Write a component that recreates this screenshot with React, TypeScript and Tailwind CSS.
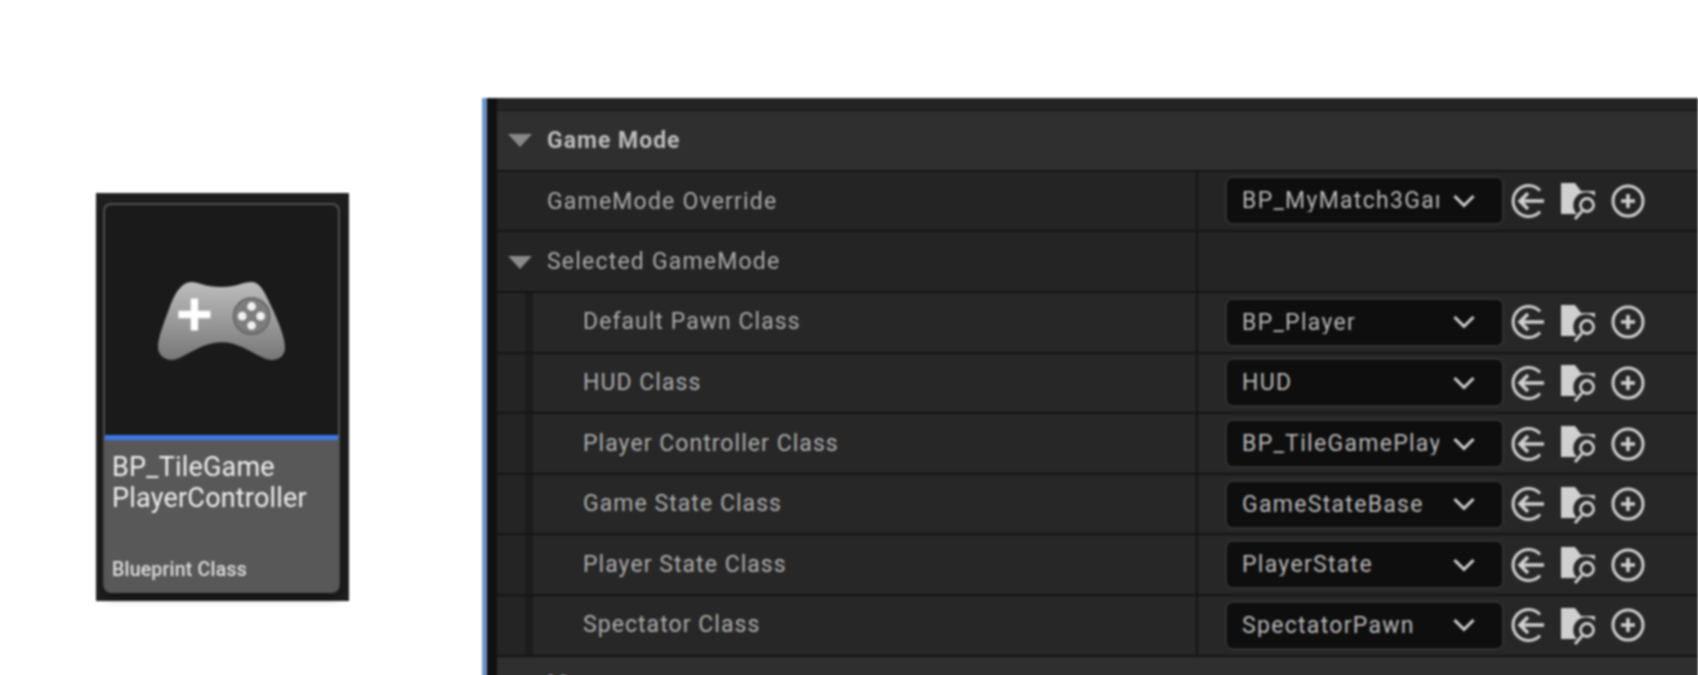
import React from "react";

const rows = [
  ["Default Pawn Class", "BP_Player"],
  ["HUD Class", "HUD"],
  ["Player Controller Class", "BP_TileGamePlayerController"],
  ["Game State Class", "GameStateBase"],
  ["Player State Class", "PlayerState"],
  ["Spectator Class", "SpectatorPawn"],
];

function Triangle() {
  return (
    <svg width="24" height="14" viewBox="0 0 24 14" className="shrink-0">
      <path d="M0 1 H24 L12 14 Z" fill="#8a8a8a" />
    </svg>
  );
}

function ResetIcon() {
  return (
    <svg width="34" height="36" viewBox="0 0 34 36" fill="none" stroke="#d0d0d0" strokeWidth="3" className="shrink-0">
      <path d="M29 7.5 A15.5 15.5 0 1 0 29 28.5" />
      <path d="M33 18 H9 M17 10 L9 18 L17 26" strokeWidth="3.6" />
    </svg>
  );
}

function FolderIcon() {
  return (
    <svg width="37" height="37" viewBox="0 0 37 37" className="mt-[2px] shrink-0">
      <path d="M1 0 H15 L21 8 H35 V13 A11 11 0 0 0 17 31 H1 Z" fill="#d0d0d0" />
      <circle cx="27" cy="22" r="6.5" fill="none" stroke="#d0d0d0" strokeWidth="2.8" />
      <path d="M22 28 L15 36" stroke="#d0d0d0" strokeWidth="3" />
    </svg>
  );
}

function PlusIcon() {
  return (
    <svg width="34" height="34" viewBox="0 0 34 34" fill="none" stroke="#d0d0d0" className="shrink-0">
      <circle cx="17" cy="17" r="15" strokeWidth="3" />
      <path d="M17 10 V24 M10 17 H24" strokeWidth="3.6" />
    </svg>
  );
}

function Combo({ text }: { text: string }) {
  return (
    <div className="flex items-center gap-[13px]">
      <div className="flex h-[47px] w-[277px] shrink-0 items-center rounded-[7px] border border-[#2a2a2a] bg-[#0e0e0e] pl-[15px] outline outline-1 outline-[#383838]">
        <span className="w-[197px] overflow-hidden whitespace-nowrap text-[23px] leading-none tracking-[1.3px] text-[#b8b8b8]">
          {text}
        </span>
        <svg width="22" height="14" viewBox="0 0 22 14" fill="none" stroke="#d0d0d0" strokeWidth="3" className="ml-[14px] shrink-0">
          <path d="M1.5 2 L11 11.5 L20.5 2" />
        </svg>
      </div>
      <div className="ml-[-5px] flex items-center">
        <ResetIcon />
        <div className="ml-[15px]">
          <FolderIcon />
        </div>
        <div className="ml-[14px]">
          <PlusIcon />
        </div>
      </div>
    </div>
  );
}

function ValueCell({ text }: { text?: string }) {
  return (
    <div className="flex h-full flex-1 items-center border-l-2 border-[#141414] pl-[28px]">
      {text ? <Combo text={text} /> : null}
    </div>
  );
}

function Gamepad() {
  return (
    <svg width="127" height="78" viewBox="55 65 380 233">
      <defs>
        <linearGradient id="padFill" x1="0" y1="0" x2="0" y2="1">
          <stop offset="0" stopColor="#bdbdbd" />
          <stop offset="1" stopColor="#777777" />
        </linearGradient>
      </defs>
      <path
        d="M155 65 C175 65 195 80 245 80 C290 80 310 65 335 65 C365 65 380 110 400 150 C420 195 435 235 435 262 C435 285 415 298 395 298 C360 298 310 245 245 245 C180 245 130 298 95 298 C70 298 55 280 55 258 C55 230 75 180 90 140 C105 100 125 65 155 65 Z"
        fill="url(#padFill)"
      />
      <path d="M164 114 V210 M116 162 H212" stroke="#ffffff" strokeWidth="22" fill="none" />
      <circle cx="335" cy="167" r="54" fill="#7d7d7d" stroke="#636363" strokeWidth="5" />
      <circle cx="335" cy="138" r="13" fill="#f2f2f2" />
      <circle cx="307" cy="167" r="13" fill="#f2f2f2" />
      <circle cx="362" cy="167" r="13" fill="#f2f2f2" />
      <circle cx="335" cy="195" r="13" fill="#f2f2f2" />
    </svg>
  );
}

function AssetCard() {
  return (
    <div className="flex h-[408px] w-[253px] flex-col bg-[#1f1f1f] pb-[8px] pl-[7px] pr-[9px] pt-[10px] blur-[0.8px]">
      <div className="flex h-full flex-col overflow-hidden rounded-[8px] border-2 border-b-0 border-[#505050] bg-[#585858] shadow-[0_4px_10px_rgba(0,0,0,0.5)]">
        <div className="flex h-[230px] shrink-0 items-center justify-center bg-[#1a1a1a] pr-[1px] pt-[2px]">
          <Gamepad />
        </div>
        <div className="h-[5px] shrink-0 bg-[#3b78e7]" />
        <div className="flex flex-1 flex-col px-[7px] pt-[12px]">
          <div className="text-[27px] leading-[31px] tracking-[0.2px] text-[#efefef]">
            BP_TileGame
            <br />
            PlayerController
          </div>
          <div className="mt-auto pb-[12px] text-[19.5px] font-medium leading-[22px] tracking-[0.2px] text-[#dedede]">Blueprint Class</div>
        </div>
      </div>
    </div>
  );
}

function DetailsPanel() {
  return (
    <div className="flex flex-1 items-stretch blur-[0.8px]">
      <div className="w-[5px] shrink-0 bg-[#6b93c4]" />
      <div className="w-[10px] shrink-0 bg-[#111111]" />
      <div className="flex flex-1 flex-col">
        <div className="h-[13px] shrink-0 border-b border-[#141414] bg-[#242424]" />
        <div className="flex h-[60.65px] shrink-0 items-center border-b-2 border-[#141414] bg-[#2f2f2f] pl-[11px]">
          <Triangle />
          <span className="ml-[15px] text-[23px] font-bold leading-none tracking-[1px] text-[#bdbdbd]">Game Mode</span>
        </div>
        <div className="flex h-[60.65px] shrink-0 items-center border-b-2 border-[#141414] bg-[#242424]">
          <div className="w-[699px] shrink-0 pl-[50px] pt-[1px] text-[23px] leading-none tracking-[1.2px] text-[#acacac]">GameMode Override</div>
          <ValueCell text="BP_MyMatch3GameMode" />
        </div>
        <div className="flex h-[60.65px] shrink-0 items-center border-b-2 border-[#141414] bg-[#242424]">
          <div className="flex w-[699px] shrink-0 items-center pl-[11px]">
            <Triangle />
            <span className="ml-[15px] text-[23px] leading-none tracking-[1.2px] text-[#acacac]">Selected GameMode</span>
          </div>
          <ValueCell />
        </div>
        {rows.map(([label, value]) => (
          <div key={label} className="flex h-[60.65px] shrink-0 items-stretch border-b-2 border-[#141414] bg-[#272727]">
            <div className="w-[28px] shrink-0 bg-[#242424]" />
            <div className="w-[8px] shrink-0 bg-[#1c1c1c]" />
            <div className="flex w-[663px] shrink-0 items-center pb-[1px] pl-[50px] text-[23px] leading-none tracking-[1.05px] text-[#acacac]">{label}</div>
            <ValueCell text={value} />
          </div>
        ))}
        <div className="flex h-[60.65px] shrink-0 items-center bg-[#2f2f2f] pb-[6px] pl-[50px]">
          <span className="text-[23px] font-bold leading-none tracking-[1px] text-[#bdbdbd]">Maps</span>
        </div>
      </div>
    </div>
  );
}

export default function App() {
  return (
    <div className="flex h-[675px] w-[1698px] overflow-hidden bg-white font-['Roboto',sans-serif]">
      <div className="w-[482px] shrink-0 pl-[96px] pt-[193px]">
        <AssetCard />
      </div>
      <div className="flex h-[800px] flex-1 pt-[98px]">
        <DetailsPanel />
      </div>
    </div>
  );
}
